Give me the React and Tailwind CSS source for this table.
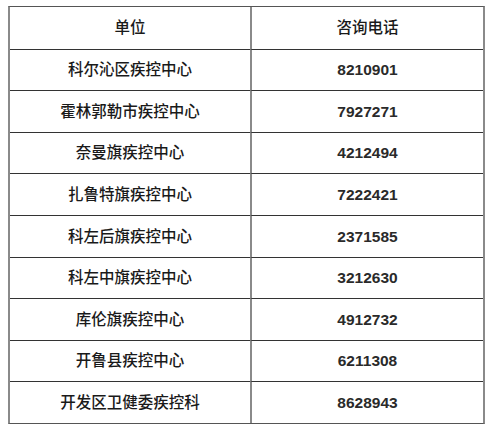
const rows = [
  ['科尔沁区疾控中心', '8210901'],
  ['霍林郭勒市疾控中心', '7927271'],
  ['奈曼旗疾控中心', '4212494'],
  ['扎鲁特旗疾控中心', '7222421'],
  ['科左后旗疾控中心', '2371585'],
  ['科左中旗疾控中心', '3212630'],
  ['库伦旗疾控中心', '4912732'],
  ['开鲁县疾控中心', '6211308'],
  ['开发区卫健委疾控科', '8628943'],
];

export default function App() {
  return (
    <div
      className="w-[496px] h-[434px] bg-white pl-2 pt-[6px] text-[#1a1a1a]"
      style={{ fontFamily: '"Liberation Sans", "Noto Sans CJK SC", sans-serif' }}
    >
      <div className="w-[477px] h-[418px] border-x-2 border-x-[#8a8a8a] border-y border-y-[#555] grid grid-cols-[240px_1fr] grid-rows-10 text-[15.5px] font-medium">
        <div className="flex items-center justify-center">单位</div>
        <div className="flex items-center justify-center border-l-2 border-[#8a8a8a]">咨询电话</div>
        {rows.map(([name, phone]) => (
          <div key={name} className="contents">
            <div className="flex items-center justify-center border-t border-[#333]">{name}</div>
            <div className="flex items-center justify-center border-t border-t-[#333] border-l-2 border-l-[#8a8a8a] font-bold text-[#2a2a2a]">
              {phone}
            </div>
          </div>
        ))}
      </div>
    </div>
  );
}
